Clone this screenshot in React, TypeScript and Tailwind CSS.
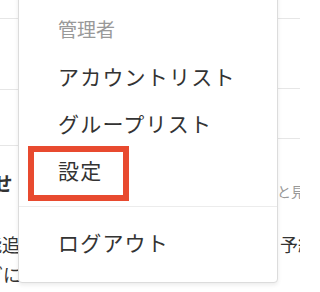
import React from 'react'

const menuItems = ['アカウントリスト', 'グループリスト', '設定']

function PageBehind() {
  return (
    <div className="text-[#333]">
      <div className="flex h-[146px]">
        <div className="w-[18px] shrink-0">
          <div className="h-[19px] border-b border-[#e6e6e6]" />
          <div className="h-[71px] border-b border-[#e6e6e6]" />
          <div className="h-[56px] border-b border-[#e6e6e6]" />
        </div>
        <div className="ml-auto w-[22px] shrink-0">
          <div className="h-[19px] border-b border-[#e6e6e6]" />
          <div className="h-[70px] border-b border-[#e6e6e6]" />
          <div className="h-[50px] border-b border-[#e6e6e6]" />
        </div>
      </div>

      <div className="mt-[20px] flex h-[34px] items-center whitespace-nowrap">
        <h2 className="-ml-[63px] w-[343px] shrink-0 text-[19px] font-bold">お知らせ</h2>
        <span className="-ml-[31px] shrink-0 pt-[16px] text-[14px] text-[#999]">もっと見る</span>
      </div>

      <div className="mt-[29px] flex h-[30px] items-center whitespace-nowrap text-[18px]">
        <span className="-ml-[16px] w-[296px] shrink-0">能追</span>
        <span className="shrink-0">予約</span>
      </div>
      <div className="flex h-[30px] items-center whitespace-nowrap text-[18px]">
        <span className="-ml-[15px] shrink-0">ぎについて</span>
      </div>
    </div>
  )
}

export default function App() {
  return (
    <div
      className="relative h-[292px] w-[300px] overflow-hidden bg-white"
      style={{ fontFamily: '"Noto Sans CJK JP", "Noto Sans", sans-serif' }}
    >
      <PageBehind />

      {/* dropdown menu */}
      <div className="absolute -top-[12px] left-[18px] w-[260px] rounded-[4px] border border-[#dcdcdc] bg-white pt-[16px] pb-[16px] shadow-[0_2px_4px_rgba(0,0,0,0.08)]">
        <div className="flex h-[48px] items-center px-[39px] text-[19px] text-[#999]">管理者</div>
        {menuItems.map((item) => (
          <div key={item} className="flex h-[47px] items-center px-[39px] text-[21px] tracking-[1.2px] text-[#333]">
            {item}
          </div>
        ))}
        <div className="my-[12px] h-px bg-[#ececec]" />
        <div className="flex h-[47px] items-center px-[39px] text-[21px] tracking-[1.2px] text-[#333]">ログアウト</div>
      </div>

      {/* annotation */}
      <div className="absolute top-[146px] left-[28px] h-[55px] w-[101px] border-[6px] border-[#e84a2f]" />
    </div>
  )
}
